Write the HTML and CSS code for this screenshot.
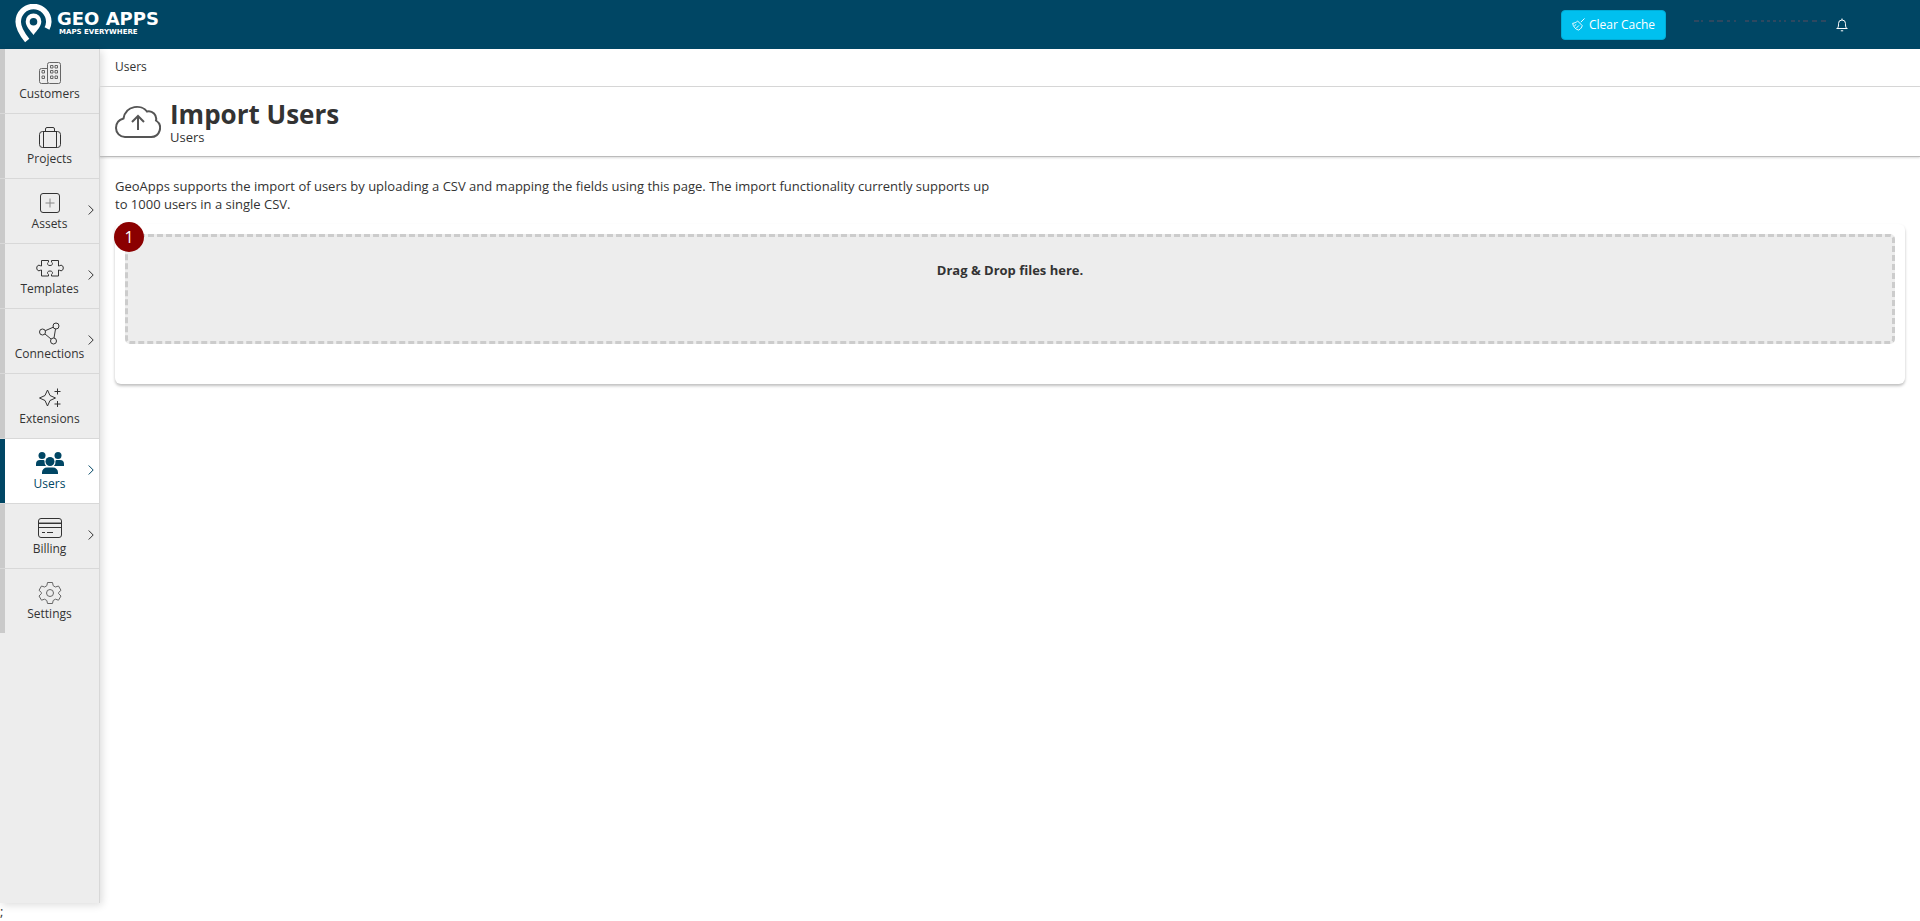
FILE: index.html
```
<!DOCTYPE html>
<html lang="en">
<head>
<meta charset="utf-8">
<title>Import Users - Geo Apps</title>
<link rel="stylesheet" href="styles.css">
</head>
<body>
<header class="topbar">
  <a class="brand" href="#">
    <svg class="brand-pin" viewBox="0 0 38 40" aria-hidden="true">
      <path d="M13.200 36.500C7 29 4.200 23.500 4.200 17.800A15.300 15.300 0 0 1 34.800 17.800Q34.600 21.500 33 24.500" fill="none" stroke="#fff" stroke-width="5.500"/>
      <path fill="#fff" fill-rule="evenodd" d="M19.500 9.500a7.800 7.800 0 0 0-7.800 8c0 5 4.500 9 7.800 13.500 3.300-4.500 7.800-8.500 7.800-13.500a7.800 7.800 0 0 0-7.800-8zm0 4.500a3.800 3.800 0 1 1 0 7.600 3.800 3.800 0 0 1 0-7.600z"/>
    </svg>
    <span class="brand-text"><span class="brand-name">GEO APPS</span><span class="brand-tag">MAPS EVERYWHERE</span></span>
  </a>
  <div class="tools">
    <button class="clear" type="button">
      <svg class="broom" viewBox="0 0 14 14" aria-hidden="true"><path d="M13.500.500 9.500 4.500M6 3.200l5 5M6 3.200C4.500 5 2.500 5.500.700 5.700c.5 3.500 3 6.500 6.300 7.300C9.500 12 10.500 10 11 8.200M2.500 8.500l2-1.500M4.500 11l3-3"/></svg>
      Clear Cache
    </button>
    <svg class="account" viewBox="0 0 132 2" aria-hidden="true"><path d="M0 1h5m2 0h2m6 0h5m3 0h6m4 0h3m4 0h2m9 0h4m3 0h5m4 0h3m3 0h3m3 0h3m3 0h2m3 0h2m5 0h4m3 0h2m3 0h5m4 0h5m4 0h5"/></svg>
    <button class="bell" type="button" aria-label="Notifications">
      <svg viewBox="0 0 12 14" aria-hidden="true"><path d="M.5 10.500h11M1.500 10.200C2.500 9 2.500 7.500 2.500 5.500a3.500 3.500 0 0 1 7 0c0 2 0 3.500 1 4.700M6 2V.500M4.800 12.800h2.400"/></svg>
    </button>
  </div>
</header>
<div class="shell">
  <nav class="sidebar">
    <a class="item" href="#"><svg class="icon" viewBox="0 0 28 24"><g stroke="#666"><rect x="11.500" y="1.500" width="13" height="21" rx="2"/><path d="M11 7.500H5.500a2 2 0 0 0-2 2v11a2 2 0 0 0 2 2H12M14.500 4.500h2.500v2.500h-2.500zM19 4.500h2.500v2.500h-2.500zM14.500 9.500h2.500v2.500h-2.500zM19 9.500h2.500v2.500h-2.500zM14.500 15h2.500v2.500h-2.500zM19 15h2.500v2.500h-2.500zM6 9.500h2.500v2.500h-2.500zM6 15h2.500v2.500h-2.500z"/></g></svg>Customers</a>
    <a class="item" href="#"><svg class="icon" viewBox="0 0 28 24"><rect x="3.500" y="5.500" width="21" height="16" rx="3"/><path d="M7.500 5.500v16M20.500 5.500v16M9.500 5.500V3a1.500 1.500 0 0 1 1.500-1.500h6A1.500 1.500 0 0 1 18.500 3v2.500"/></svg>Projects</a>
    <a class="item" href="#"><svg class="icon" viewBox="0 0 28 24"><rect x="4.500" y="2.500" width="19" height="19" rx="2.500"/><path stroke="#888" d="M9.500 12h9M14 7.500v9"/></svg>Assets<svg class="chev" viewBox="0 0 6 10"><path d="M.7.500 5.200 5 .7 9.500"/></svg></a>
    <a class="item" href="#"><svg class="icon" viewBox="0 0 28 24"><path d="M5.500 4.500h7v1.500c-1.500 1-1.500 3.500 1.500 3.500s3-2.500 1.500-3.500V4.500h7v5.500c1 .2 1.500-.8 2.500-.8 3 0 3 5.600 0 5.600-1 0-1.500-1-2.500-.8v6h-7v-1.500c1.500-1 1.500-3.500-1.500-3.500s-3 2.500-1.500 3.500v1.500h-7v-6c-1-.2-1.500.8-2.500.8-3 0-3-5.600 0-5.600 1 0 1.500 1 2.500.8z"/></svg>Templates<svg class="chev" viewBox="0 0 6 10"><path d="M.7.500 5.200 5 .7 9.500"/></svg></a>
    <a class="item" href="#"><svg class="icon" viewBox="0 0 28 24"><circle cx="6.500" cy="11" r="3"/><circle cx="20" cy="5" r="3"/><circle cx="17.500" cy="20" r="3"/><path d="M9.300 9.700l8-3.500M9 13l6 5M19.500 8l-1.500 9"/></svg>Connections<svg class="chev" viewBox="0 0 6 10"><path d="M.7.500 5.200 5 .7 9.500"/></svg></a>
    <a class="item" href="#"><svg class="icon" viewBox="0 0 28 24"><path d="M11.500 4l2.500 5.500 5.500 2.500-5.500 2.500-2.500 5.500L9 14.500 3.500 12 9 9.500zM18.500 5.500h6M21.500 2.500v6M18.500 18h6M21.500 15v6"/></svg>Extensions</a>
    <a class="item active" href="#" aria-current="page"><svg class="icon" viewBox="0 0 28 24"><g fill="currentColor" stroke="none"><circle cx="6" cy="4.500" r="3.500"/><circle cx="22" cy="4.500" r="3.500"/><circle cx="14" cy="10.500" r="4.500"/><path d="M0 15V13a4 4 0 0 1 4-4h3.500q1 0 1 1-.2 3 1.500 5zM28 15V13a4 4 0 0 0-4-4h-3.500q-1 0-1 1 .2 3-1.500 5zM6 23v-1.500a5 5 0 0 1 5-5h6a5 5 0 0 1 5 5V23z"/></g></svg>Users<svg class="chev" viewBox="0 0 6 10"><path d="M.7.500 5.200 5 .7 9.500"/></svg></a>
    <a class="item" href="#"><svg class="icon" viewBox="0 0 28 24"><rect x="2.500" y="2.500" width="23" height="19" rx="2.500"/><path d="M2.500 7.500h23M2.500 11.500h23M6 16.500h3M11 16.500h6"/><path stroke="#999" d="M3 6.500h22"/></svg>Billing<svg class="chev" viewBox="0 0 6 10"><path d="M.7.500 5.200 5 .7 9.500"/></svg></a>
    <a class="item" href="#"><svg class="icon" viewBox="0 0 28 24"><g stroke="#666"><circle cx="14" cy="12" r="3.500"/><path d="M11.500 1.500h5l.7 3.200 2.200 1.300 3.100-1 2.500 4.300L22.600 11.500v1.200L25 15l-2.500 4.200-3.100-1-2.200 1.300-.7 3h-5l-.7-3-2.200-1.300-3.100 1L3 15l2.400-2.300v-1.200L3 9.300 5.500 5l3.100 1 2.200-1.300z" stroke-linejoin="round"/></g></svg>Settings</a>
  </nav>
  <main class="content">
    <div class="crumbs"><a href="#">Users</a></div>
    <div class="page-head">
      <svg class="cloud" viewBox="0 0 46 34" aria-hidden="true"><path d="M10 32h26a9 9 0 0 0 5-16.500 7.500 7.500 0 0 0-9-9C27-.5 11-.5 8.500 13.500 3 15 1 19 1 23a9 9 0 0 0 9 9z"/><path d="M23 25V11M17 17l6-6 6 6"/></svg>
      <div><h1>Import Users</h1><p class="sub">Users</p></div>
    </div>
    <p class="intro">GeoApps supports the import of users by uploading a CSV and mapping the fields using this page. The import functionality currently supports up to 1000 users in a single CSV.</p>
    <section class="card">
      <span class="step">1</span>
      <div class="drop">Drag &amp; Drop files here.</div>
    </section>
  </main>
</div>
<footer class="foot">;</footer>
</body>
</html>
```
FILE: styles.css
```
* { box-sizing: border-box; }
body {
  margin: 0;
  min-height: 100vh;
  display: flex;
  flex-direction: column;
  font: 13px/18px "Open Sans", sans-serif;
  color: #333;
  background: #fff;
}
a { color: inherit; text-decoration: none; }
h1, p { margin: 0; }
svg { display: block; fill: none; stroke: currentColor; }

.topbar {
  height: 49px;
  padding: 0 72px 0 14px;
  display: flex;
  align-items: center;
  justify-content: space-between;
  background: #004664;
  color: #fff;
}
.brand { display: flex; align-items: center; gap: 5px; padding-bottom: 2px; }
.brand-pin { width: 38px; height: 40px; stroke: none; }
.brand-text { display: flex; flex-direction: column; gap: 1px; font-family: "DejaVu Sans", sans-serif; font-weight: bold; }
.brand-name { font-size: 18px; line-height: 16px; }
.brand-tag { font-size: 7px; line-height: 8px; padding-left: 2px; }
.tools { display: flex; align-items: center; }
.clear {
  display: flex;
  align-items: center;
  gap: 4px;
  height: 30px;
  padding: 0 10px;
  border: 1px solid #00acd6;
  border-radius: 4px;
  background: #00c0ef;
  color: #fff;
  font: 500 12px/18px "Open Sans", sans-serif;
}
.broom { width: 13px; height: 13px; }
.account { width: 132px; height: 2px; margin: 0 10px 8px 28px; stroke: #5a4a5c; }
.bell { border: 0; padding: 0; background: none; color: #fff; }
.bell svg { width: 12px; height: 14px; }

.shell { flex: 1; display: flex; }
.sidebar {
  width: 100px;
  flex: none;
  background: #ededed;
  border-right: 1px solid #d8d8d8;
  box-shadow: 2px 2px 8px rgba(0, 0, 0, .14);
}
.item {
  position: relative;
  height: 65px;
  padding-top: 12px;
  display: flex;
  flex-direction: column;
  align-items: center;
  border-bottom: 1px solid #d8d8d8;
  background: linear-gradient(90deg, #cacaca 5px, transparent 5px);
  font-size: 12px;
}
.item:last-child { height: 64px; border-bottom: 0; }
.item.active { color: #004664; background: linear-gradient(90deg, #004664 5px, #fff 5px); }
.icon { width: 28px; height: 24px; }
.chev { position: absolute; right: 5px; top: 26px; width: 6px; height: 10px; }

.content { flex: 1; min-width: 0; }
.crumbs { height: 38px; padding: 9px 15px; border-bottom: 1px solid #d8d8d8; font-size: 12px; }
.page-head {
  display: flex;
  gap: 9px;
  padding: 14px 15px 10px;
  border-bottom: 1px solid #bbb;
  box-shadow: 0 1px 2px rgba(0, 0, 0, .15);
}
.cloud { width: 46px; height: 34px; margin-top: 4px; stroke: #555; stroke-width: 2; }
.page-head h1 { font-size: 26px; line-height: 27px; }
.sub { line-height: 18px; }
.intro { max-width: 910px; padding: 20px 15px 0; }
.card {
  position: relative;
  margin: 11px 15px 0;
  padding: 10px 10px 40px;
  border-radius: 6px;
  box-shadow: 0 2px 3px rgba(0, 0, 0, .25);
}
.step {
  position: absolute;
  left: -1px;
  top: -2px;
  width: 30px;
  height: 30px;
  border-radius: 50%;
  background: #8b0000;
  color: #fff;
  font-size: 16px;
  line-height: 30px;
  text-align: center;
}
.drop {
  height: 110px;
  padding-top: 24px;
  border: 3px dashed #ccc;
  border-radius: 5px;
  background: #ededed;
  font-weight: bold;
  text-align: center;
}
.foot { height: 18px; line-height: 16px; }
```
